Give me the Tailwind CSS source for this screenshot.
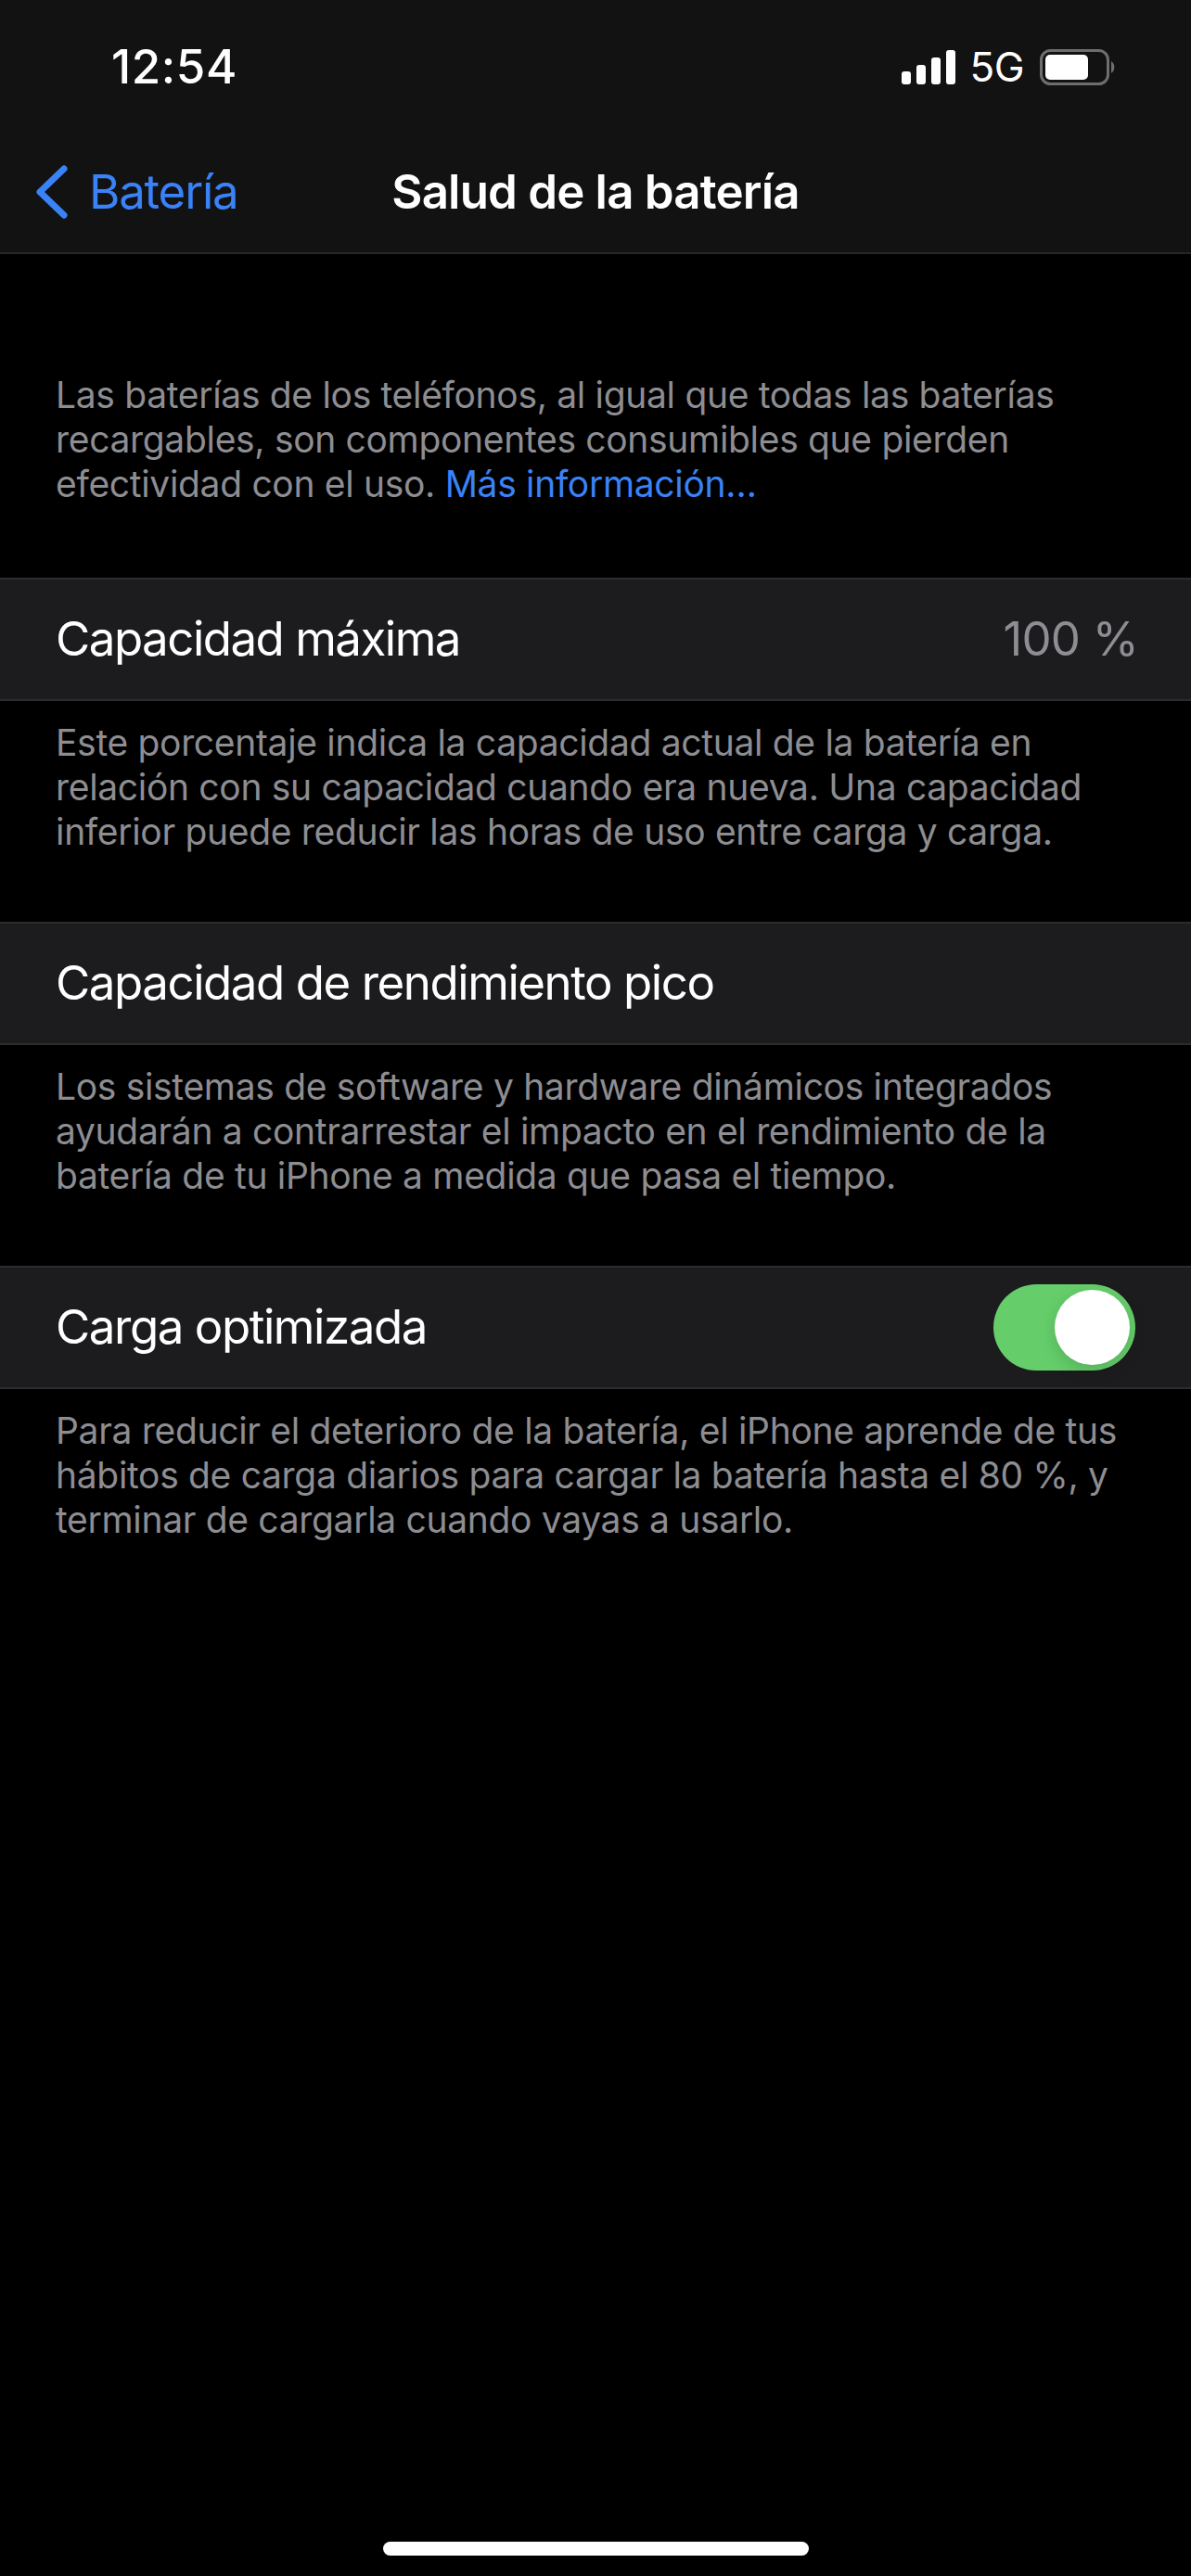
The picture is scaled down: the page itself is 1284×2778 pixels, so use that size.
<!DOCTYPE html>
<html lang="es">
<head>
    <meta charset="UTF-8">
    <meta name="viewport" content="width=device-width, initial-scale=1.0">
    <title>Salud de la batería</title>
    <script src="https://cdn.jsdelivr.net/npm/@tailwindcss/browser@4"></script>
</head>
<body class="bg-black h-[2778px] w-[1284px] overflow-hidden flex flex-col font-['Inter',sans-serif] antialiased">
    <!-- Status bar + nav -->
    <header class="bg-[#121212] border-b-2 border-[#262628] h-[274px] shrink-0">
        <div class="h-[144px] flex items-center justify-between pl-[120px] pr-[81px]">
            <span class="text-white text-[51px] font-medium tracking-[0.6px]">12:54</span>
            <div class="flex items-center">
                <svg width="58" height="37" viewBox="0 0 58 37" fill="#fff">
                    <rect x="0" y="23" width="10" height="14" rx="3"/>
                    <rect x="16" y="16" width="10" height="21" rx="3"/>
                    <rect x="32" y="8" width="10" height="29" rx="3"/>
                    <rect x="48" y="0" width="10" height="37" rx="3"/>
                </svg>
                <span class="text-white text-[44px] ml-[15px] leading-none tracking-[-0.5px]">5G</span>
                <svg class="ml-[17px]" width="82" height="39" viewBox="0 0 82 39">
                    <rect x="1.5" y="1.5" width="72" height="36" rx="10" fill="none" stroke="#6e6e6e" stroke-width="3"/>
                    <rect x="6" y="6" width="46" height="27" rx="5" fill="#fff"/>
                    <path d="M77 13 a8 8 0 0 1 0 13 z" fill="#6e6e6e"/>
                </svg>
            </div>
        </div>
        <nav class="h-[128px] relative flex items-center justify-center pb-[3px]">
            <div class="absolute left-[39px] top-0 h-full flex items-center text-[#3a82f7] pb-[3px]">
                <svg width="34" height="58" viewBox="0 0 34 58" fill="none" stroke="currentColor" stroke-width="7" stroke-linecap="round" stroke-linejoin="round">
                    <path d="M30 4 L4 29 L30 54"/>
                </svg>
                <span class="ml-[23px] text-[51px] leading-none tracking-[-1.2px]">Batería</span>
            </div>
            <h1 class="text-white text-[51px] font-semibold leading-none tracking-[-0.8px]">Salud de la batería</h1>
        </nav>
    </header>

    <p class="px-[60px] pt-[128px] pb-[77px] text-[39px] leading-[48px] text-[#8d8d92] tracking-[-0.32px]">
        Las baterías de los teléfonos, al igual que todas las baterías<br>
        recargables, son componentes consumibles que pierden<br>
        efectividad con el uso. <span class="text-[#3a82f7]">Más información…</span>
    </p>

    <div class="h-[133px] bg-[#1c1c1e] border-y-2 border-[#2c2c2e] flex items-center justify-between px-[60px]">
        <span class="text-white text-[51px] tracking-[-1.5px]">Capacidad máxima</span>
        <span class="text-[#8d8d92] text-[51px] tracking-[-0.8px] mr-[-3px]">100 %</span>
    </div>
    <p class="px-[60px] pt-[21px] pb-[73px] text-[39px] leading-[48px] text-[#8d8d92] tracking-[-0.32px]">
        Este porcentaje indica la capacidad actual de la batería en<br>
        relación con su capacidad cuando era nueva. Una capacidad<br>
        inferior puede reducir las horas de uso entre carga y carga.
    </p>

    <div class="h-[133px] bg-[#1c1c1e] border-y-2 border-[#2c2c2e] flex items-center px-[60px]">
        <span class="text-white text-[51px] tracking-[-1.45px]">Capacidad de rendimiento pico</span>
    </div>
    <p class="px-[60px] pt-[21px] pb-[73px] text-[39px] leading-[48px] text-[#8d8d92] tracking-[-0.32px]">
        Los sistemas de software y hardware dinámicos integrados<br>
        ayudarán a contrarrestar el impacto en el rendimiento de la<br>
        batería de tu iPhone a medida que pasa el tiempo.
    </p>

    <div class="h-[133px] bg-[#1c1c1e] border-y-2 border-[#2c2c2e] flex items-center justify-between px-[60px]">
        <span class="text-white text-[51px] tracking-[-1.45px]">Carga optimizada</span>
        <div class="w-[153px] h-[93px] rounded-full bg-[#65ce6a] flex items-center justify-end pr-[6px]">
            <div class="w-[81px] h-[81px] rounded-full bg-white shadow-[0_6px_18px_rgba(0,0,0,0.15)]"></div>
        </div>
    </div>
    <p class="px-[60px] pt-[21px] text-[39px] leading-[48px] text-[#8d8d92] tracking-[-0.32px]">
        Para reducir el deterioro de la batería, el iPhone aprende de tus<br>
        hábitos de carga diarios para cargar la batería hasta el 80 %, y<br>
        terminar de cargarla cuando vayas a usarlo.
    </p>

    <!-- Home indicator -->
    <div class="mt-auto mb-[22px] mx-auto w-[459px] h-[15px] rounded-full bg-white"></div>
</body>
</html>
